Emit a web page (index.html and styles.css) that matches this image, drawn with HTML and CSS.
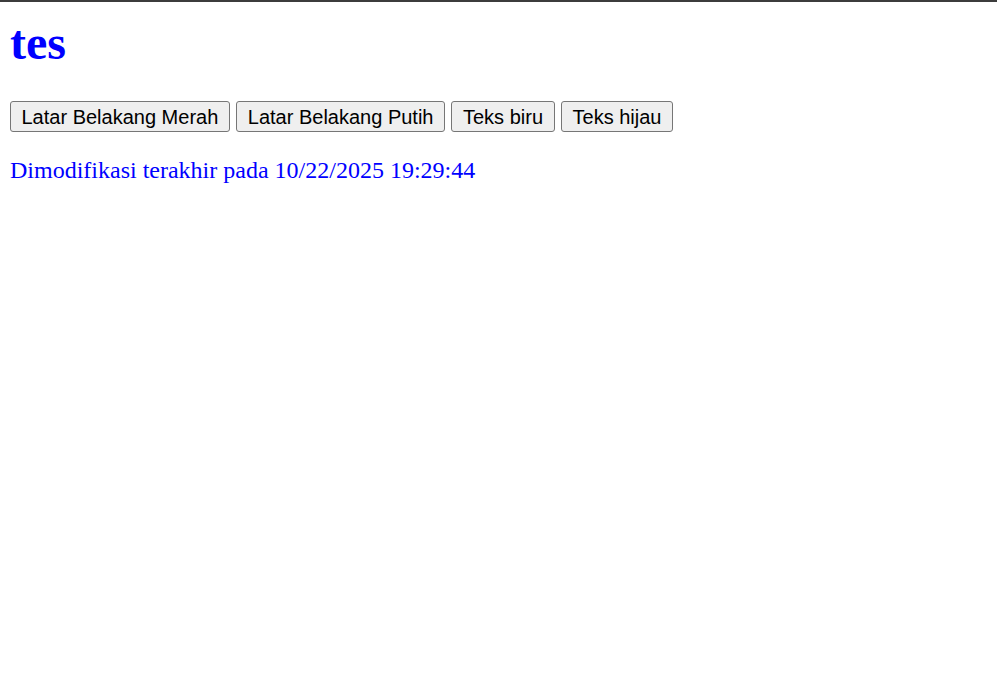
FILE: index.html
```html
<!DOCTYPE html>
<html>
<head>
<meta charset="utf-8">
<title>tes</title>
<link rel="stylesheet" href="styles.css">
</head>
<body>
<div class="topline"></div>
<main class="page">
  <h1 class="title">tes</h1>
  <div class="buttons">
    <button class="btn">Latar Belakang Merah</button>
    <button class="btn">Latar Belakang Putih</button>
    <button class="btn">Teks biru</button>
    <button class="btn">Teks hijau</button>
  </div>
  <p class="modified">Dimodifikasi terakhir pada 10/22/2025 19:29:44</p>
</main>
</body>
</html>
```
FILE: styles.css
```css
html, body {
  margin: 0;
  padding: 0;
  background: #ffffff;
}
body {
  font-family: "Liberation Serif", "Times New Roman", serif;
  color: #0000ff;
}
.topline {
  height: 2px;
  background: #3c3c3c;
}
.page {
  padding: 0 10px;
  display: flex;
  flex-direction: column;
  align-items: flex-start;
}
.title {
  font-size: 48px;
  font-weight: bold;
  line-height: 53px;
  margin: 14px 0 0;
  color: #0000ff;
}
.buttons {
  display: flex;
  gap: 6.5px;
  margin-top: 32px;
}
.btn {
  font-family: "Liberation Sans", Arial, sans-serif;
  font-size: 20px;
  line-height: 23px;
  color: #000000;
  background: #efefef;
  border: 1px solid #767676;
  border-radius: 3px;
  padding: 3px 10.5px 2px;
  margin: 0;
  height: 31px;
}
.modified {
  font-size: 24px;
  line-height: 27px;
  margin: 24.5px 0 0;
  color: #0000ff;
}
```
